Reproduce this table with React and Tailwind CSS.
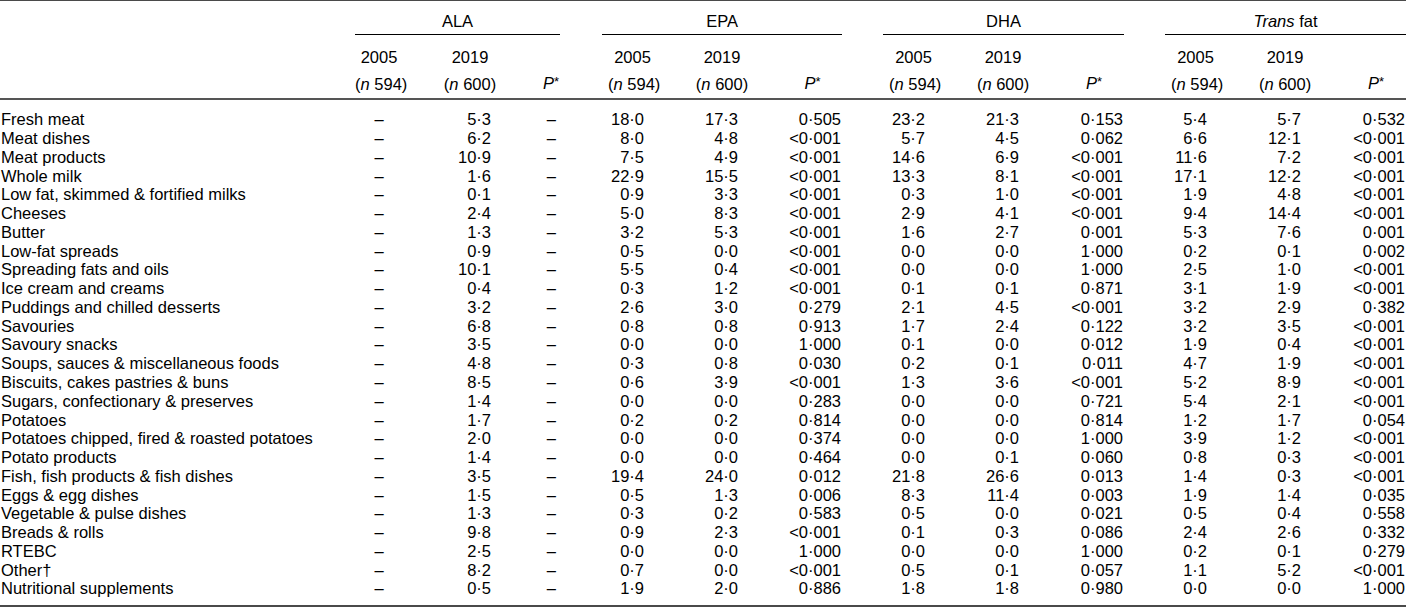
import React from "react";

const DASH = "\u2013";

// label, ALA 2019, EPA 2005/2019/P, DHA 2005/2019/P, Trans 2005/2019/P
const rows = [
  ["Fresh meat", "5·3", "18·0", "17·3", "0·505", "23·2", "21·3", "0·153", "5·4", "5·7", "0·532"],
  ["Meat dishes", "6·2", "8·0", "4·8", "<0·001", "5·7", "4·5", "0·062", "6·6", "12·1", "<0·001"],
  ["Meat products", "10·9", "7·5", "4·9", "<0·001", "14·6", "6·9", "<0·001", "11·6", "7·2", "<0·001"],
  ["Whole milk", "1·6", "22·9", "15·5", "<0·001", "13·3", "8·1", "<0·001", "17·1", "12·2", "<0·001"],
  ["Low fat, skimmed & fortified milks", "0·1", "0·9", "3·3", "<0·001", "0·3", "1·0", "<0·001", "1·9", "4·8", "<0·001"],
  ["Cheeses", "2·4", "5·0", "8·3", "<0·001", "2·9", "4·1", "<0·001", "9·4", "14·4", "<0·001"],
  ["Butter", "1·3", "3·2", "5·3", "<0·001", "1·6", "2·7", "0·001", "5·3", "7·6", "0·001"],
  ["Low-fat spreads", "0·9", "0·5", "0·0", "<0·001", "0·0", "0·0", "1·000", "0·2", "0·1", "0·002"],
  ["Spreading fats and oils", "10·1", "5·5", "0·4", "<0·001", "0·0", "0·0", "1·000", "2·5", "1·0", "<0·001"],
  ["Ice cream and creams", "0·4", "0·3", "1·2", "<0·001", "0·1", "0·1", "0·871", "3·1", "1·9", "<0·001"],
  ["Puddings and chilled desserts", "3·2", "2·6", "3·0", "0·279", "2·1", "4·5", "<0·001", "3·2", "2·9", "0·382"],
  ["Savouries", "6·8", "0·8", "0·8", "0·913", "1·7", "2·4", "0·122", "3·2", "3·5", "<0·001"],
  ["Savoury snacks", "3·5", "0·0", "0·0", "1·000", "0·1", "0·0", "0·012", "1·9", "0·4", "<0·001"],
  ["Soups, sauces & miscellaneous foods", "4·8", "0·3", "0·8", "0·030", "0·2", "0·1", "0·011", "4·7", "1·9", "<0·001"],
  ["Biscuits, cakes pastries & buns", "8·5", "0·6", "3·9", "<0·001", "1·3", "3·6", "<0·001", "5·2", "8·9", "<0·001"],
  ["Sugars, confectionary & preserves", "1·4", "0·0", "0·0", "0·283", "0·0", "0·0", "0·721", "5·4", "2·1", "<0·001"],
  ["Potatoes", "1·7", "0·2", "0·2", "0·814", "0·0", "0·0", "0·814", "1·2", "1·7", "0·054"],
  ["Potatoes chipped, fired & roasted potatoes", "2·0", "0·0", "0·0", "0·374", "0·0", "0·0", "1·000", "3·9", "1·2", "<0·001"],
  ["Potato products", "1·4", "0·0", "0·0", "0·464", "0·0", "0·1", "0·060", "0·8", "0·3", "<0·001"],
  ["Fish, fish products & fish dishes", "3·5", "19·4", "24·0", "0·012", "21·8", "26·6", "0·013", "1·4", "0·3", "<0·001"],
  ["Eggs & egg dishes", "1·5", "0·5", "1·3", "0·006", "8·3", "11·4", "0·003", "1·9", "1·4", "0·035"],
  ["Vegetable & pulse dishes", "1·3", "0·3", "0·2", "0·583", "0·5", "0·0", "0·021", "0·5", "0·4", "0·558"],
  ["Breads & rolls", "9·8", "0·9", "2·3", "<0·001", "0·1", "0·3", "0·086", "2·4", "2·6", "0·332"],
  ["RTEBC", "2·5", "0·0", "0·0", "1·000", "0·0", "0·0", "1·000", "0·2", "0·1", "0·279"],
  ["Other†", "8·2", "0·7", "0·0", "<0·001", "0·5", "0·1", "0·057", "1·1", "5·2", "<0·001"],
  ["Nutritional supplements", "0·5", "1·9", "2·0", "0·886", "1·8", "1·8", "0·980", "0·0", "0·0", "1·000"],
];

const groups = [
  { key: "epa", label: "EPA" },
  { key: "dha", label: "DHA" },
  { key: "trans", label: <><i>Trans</i> fat</> },
];

function PStar() {
  return (
    <span>
      <i>P</i>
      <span className="relative -top-[3px] text-[13px]">*</span>
    </span>
  );
}

function N({ v }) {
  return (
    <span>
      (<i>n</i> {v})
    </span>
  );
}

export default function App() {
  const cell = "p-0 font-normal whitespace-nowrap";
  return (
    <div className="w-[1406px] bg-white font-['Liberation_Sans',Arial,sans-serif] text-[16.5px] leading-[18.76px] text-black">
      <table className="w-[1406px] table-fixed border-collapse border-t border-b-2 border-[#4a4a4a]">
        <colgroup>
          <col className="w-[355px]" />
          <col className="w-[48px]" />
          <col className="w-[100px]" />
          <col className="w-[57px]" />
          <col className="w-[42px]" />
          <col className="w-[55px]" />
          <col className="w-[92px]" />
          <col className="w-[93px]" />
          <col className="w-[41px]" />
          <col className="w-[55px]" />
          <col className="w-[92px]" />
          <col className="w-[94px]" />
          <col className="w-[41px]" />
          <col className="w-[55px]" />
          <col className="w-[92px]" />
          <col className="w-[94px]" />
        </colgroup>
        <thead>
          <tr>
            <th className={cell} />
            <th className={`${cell} pt-[11px]`} colSpan={3}>
              <div className="border-b border-black pb-[3px] text-center">ALA</div>
            </th>
            {groups.map((g) => (
              <React.Fragment key={g.key}>
                <th className={cell} />
                <th className={`${cell} pt-[11px]`} colSpan={3}>
                  <div className="border-b border-black pb-[3px] text-center">{g.label}</div>
                </th>
              </React.Fragment>
            ))}
          </tr>
          <tr>
            <th className={`${cell} pt-[13px] pb-[7px]`} />
            <th className={`${cell} pt-[13px] pb-[7px] text-center`}>2005</th>
            <th className={`${cell} pt-[13px] pb-[7px] pl-[34px] text-center`}>2019</th>
            <th className={cell} />
            {groups.map((g) => (
              <React.Fragment key={g.key}>
                <th className={cell} />
                <th className={`${cell} pt-[13px] pb-[7px] pl-[6px] text-center`}>2005</th>
                <th className={`${cell} pt-[13px] pb-[7px] pl-[38px] text-center`}>2019</th>
                <th className={cell} />
              </React.Fragment>
            ))}
          </tr>
          <tr className="border-b-2 border-[#555]">
            <th className={`${cell} pb-[4px]`} />
            <th className={`${cell} pb-[4px] text-center`}>
              <N v="594" />
            </th>
            <th className={`${cell} pb-[4px] pl-[34px] text-center`}>
              <N v="600" />
            </th>
            <th className={`${cell} pb-[4px] pr-[1px] text-right`}>
              <PStar />
            </th>
            {groups.map((g) => (
              <React.Fragment key={g.key}>
                <th className={cell} />
                <th className={`${cell} pb-[4px] pl-[6px] text-center`}>
                  <N v="594" />
                </th>
                <th className={`${cell} pb-[4px] pl-[38px] text-center`}>
                  <N v="600" />
                </th>
                <th className={`${cell} pb-[4px] pl-[34px] text-center`}>
                  <PStar />
                </th>
              </React.Fragment>
            ))}
          </tr>
        </thead>
        <tbody>
          {rows.map((r, i) => {
            const pad = i === 0 ? "pt-[10px]" : i === rows.length - 1 ? "pb-[7px]" : "";
            const td = `${cell} ${pad}`;
            return (
              <tr key={r[0]}>
                <td className={`${td} pl-[1px] text-left`}>{r[0]}</td>
                <td className={`${td} text-center`}>{DASH}</td>
                <td className={`${td} pr-[12px] text-right`}>{r[1]}</td>
                <td className={`${td} pr-[4px] text-right`}>{DASH}</td>
                {[0, 1, 2].map((g) => (
                  <React.Fragment key={g}>
                    <td className={td} />
                    <td className={`${td} pr-[13px] text-right`}>{r[2 + g * 3]}</td>
                    <td className={`${td} pr-[11px] text-right`}>{r[3 + g * 3]}</td>
                    <td className={`${td} pr-[1px] text-right`}>{r[4 + g * 3]}</td>
                  </React.Fragment>
                ))}
              </tr>
            );
          })}
        </tbody>
      </table>
    </div>
  );
}
